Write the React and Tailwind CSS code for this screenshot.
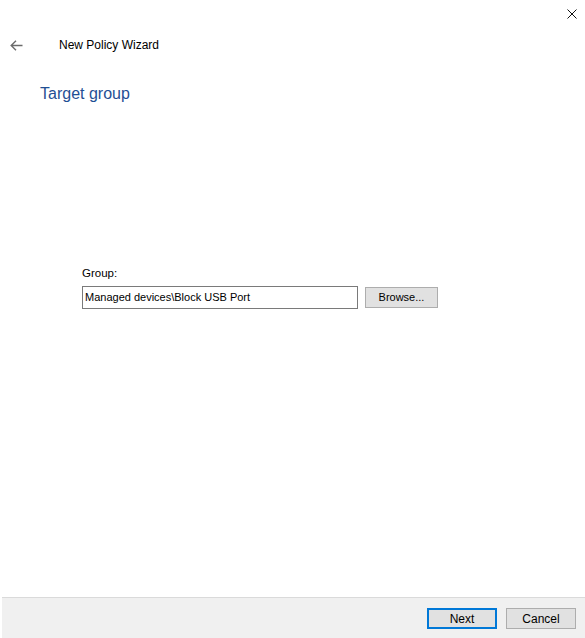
import React from "react";

export default function App() {
  return (
    <div
      className="w-[585px] h-[638px] bg-white flex flex-col text-black"
      style={{ fontFamily: '"Segoe UI", "Liberation Sans", "Noto Sans", sans-serif' }}
    >
      {/* close row */}
      <div className="h-[28px] flex justify-end items-center pr-[8px]">
        <svg width="10" height="10" viewBox="0 0 10 10">
          <path d="M0.5 0.5 L9.5 9.5 M9.5 0.5 L0.5 9.5" stroke="#111" strokeWidth="1" />
        </svg>
      </div>
      {/* header row */}
      <div className="h-[34px] flex items-center">
        <div className="w-[59px] flex items-center pl-[10px]">
          <svg width="13" height="11" viewBox="0 0 13 11">
            <path d="M6 0.8 L1.2 5.5 L6 10.2 M1.2 5.5 L12.5 5.5" stroke="#6b6b6b" strokeWidth="1.4" fill="none" />
          </svg>
        </div>
        <span className="text-[12px] leading-none">New Policy Wizard</span>
      </div>
      {/* title */}
      <div className="pl-[40px] mt-[21px] text-[16px] leading-[22px] text-[#1f4f94]">Target group</div>
      {/* group section */}
      <div className="pl-[82px] mt-[161px] flex flex-col">
        <div className="text-[11.5px] leading-[14px]">Group:</div>
        <div className="mt-[6px] flex items-center gap-[7px]">
          <div className="w-[276px] h-[23px] border border-[#7a7a7a] flex items-center px-[2px] text-[11px]">
            Managed devices\Block USB Port
          </div>
          <div className="w-[73px] h-[21px] border border-[#adadad] bg-[#e1e1e1] flex items-center justify-center text-[11px]">
            Browse...
          </div>
        </div>
      </div>
      <div className="flex-1" />
      {/* footer */}
      <div className="h-[41px] ml-[2px] bg-[#f0f0f0] border-t border-[#dadada] flex items-start justify-end pt-[10px] pr-[9px] gap-[9px]">
        <div className="w-[70px] h-[21px] border-2 border-[#0078d7] bg-[#e1e1e1] flex items-center justify-center text-[12px]">
          Next
        </div>
        <div className="w-[70px] h-[21px] border border-[#adadad] bg-[#e1e1e1] flex items-center justify-center text-[12px]">
          Cancel
        </div>
      </div>
    </div>
  );
}
